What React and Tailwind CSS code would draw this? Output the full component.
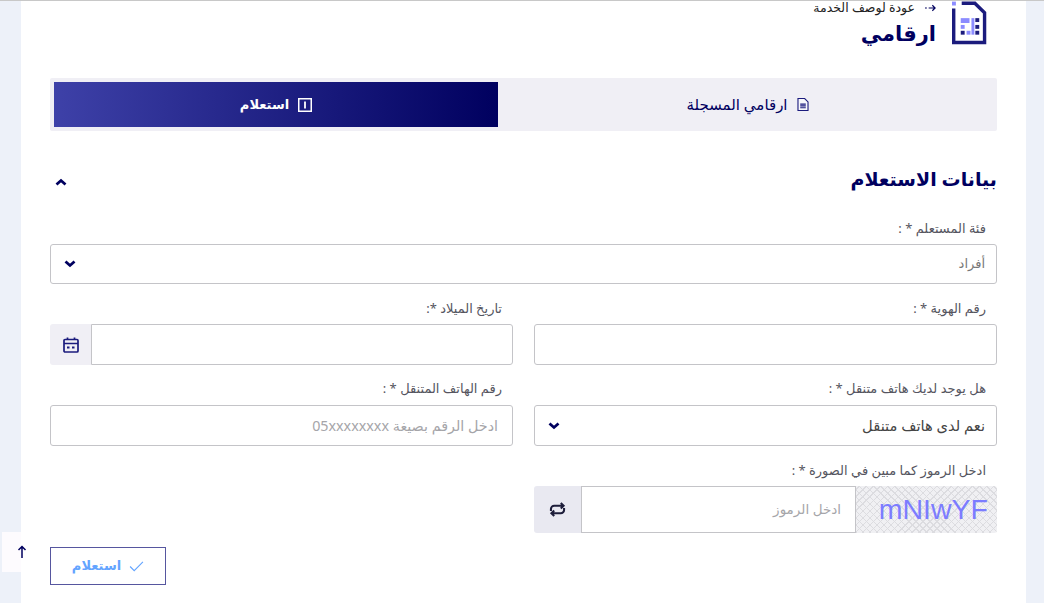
import React from "react";

function DocIcon({ className }) {
  return (
    <svg viewBox="0 0 36 44" className={className}>
      <path d="M1.750 7V42H33.500V11.500L23.500 1.750H10" fill="none" stroke="#1b1b7d" strokeWidth="3.500" />
      <rect x="0" y="0" width="4" height="4" fill="#8c8cff" />
      <rect x="9" y="17" width="9" height="5" fill="#8c8cff" />
      <rect x="9" y="24" width="4" height="4" fill="#8c8cff" />
      <rect x="9" y="30" width="4" height="4" fill="#1b1b7d" />
      <rect x="15" y="30" width="4" height="4" fill="#8c8cff" />
      <rect x="20" y="17" width="3" height="17" fill="#8c8cff" />
      <rect x="24" y="17" width="4" height="4" fill="#1b1b7d" />
      <rect x="24" y="24" width="4" height="4" fill="#1b1b7d" />
      <rect x="24" y="30" width="4" height="4" fill="#1b1b7d" />
    </svg>
  );
}

function Chevron({ up }) {
  return (
    <svg viewBox="0 0 12 8" className={up ? "w-[12px] h-[8px] rotate-180" : "w-[12px] h-[8px]"}>
      <path d="M1.500 1.500L6 5.500L10.500 1.500" fill="none" stroke="#00005f" strokeWidth="2.800" />
    </svg>
  );
}

function Label({ children }) {
  return <div className="text-[13px] leading-[16px] text-[#555560] pr-[11px] h-[16px]">{children}</div>;
}

function Box({ children, className = "" }) {
  return (
    <div className={"border border-[#c4c4c8] rounded-[3px] bg-white flex items-center " + className}>{children}</div>
  );
}

export default function App() {
  return (
    <div dir="rtl" className="h-[603px] overflow-hidden bg-[#edf1f9] font-['Noto_Sans','DejaVu_Sans',sans-serif] border-t border-[#c8c8c8] relative">
      <div className="mr-[18px] w-[1005px] h-full bg-white px-[29px]">
        {/* header */}
        <div className="h-[77px] flex items-start pr-[10px] gap-[16px]">
          <DocIcon className="w-[35px] h-[44px] shrink-0" />
          <div className="flex flex-col items-start">
            <div className="flex items-center gap-[10px] h-[13px]">
              <svg viewBox="0 0 12 8" className="w-[11px] h-[8px]">
                <path d="M0 4H2M4 4H11M8 1L11 4L8 7" fill="none" stroke="#00005f" strokeWidth="1.300" />
              </svg>
              <span className="text-[12.500px] leading-[13px] text-[#222]">عودة لوصف الخدمة</span>
            </div>
            <div className="text-[21px] leading-[30px] font-bold text-[#00005f] mt-[4px]">ارقامي</div>
          </div>
        </div>

        {/* tabs */}
        <div className="h-[53px] bg-[#f0eff5] rounded-[2px] flex p-[4px] pr-0">
          <div className="w-[499px] flex items-center justify-center gap-[9px] text-[15px] text-[#00005f]">
            <svg viewBox="0 0 12 14" className="w-[12px] h-[13px]">
              <path d="M.6.600H7.800L11.400 4.200V13.400H.6Z" fill="#f8f8fc" stroke="#1b1b7d" strokeWidth="1.200" />
              <path d="M3 6.500H9M3 8.500H9M3 10.500H9" stroke="#1b1b7d" strokeWidth="1.300" />
            </svg>
            ارقامي المسجلة
          </div>
          <div className="w-[444px] flex items-center justify-center gap-[9px] text-[13px] font-bold text-white bg-[linear-gradient(90deg,#3e41a8,#00005f)]">
            <svg viewBox="0 0 14 14" className="w-[14px] h-[14px]">
              <rect x=".75" y=".75" width="12.500" height="12.500" fill="none" stroke="#fff" strokeWidth="1.500" />
              <path d="M7 3.500V10.500" stroke="#fff" strokeWidth="1.800" />
            </svg>
            استعلام
          </div>
        </div>

        {/* section heading */}
        <div className="h-[30px] mt-[33px] flex items-center justify-between">
          <span className="text-[19px] font-bold leading-[30px] text-[#00005f]">بيانات الاستعلام</span>
          <span className="pl-[5px] pt-[5px] flex"><Chevron up /></span>
        </div>

        {/* form */}
        <div className="mt-[26px] flex flex-col">
          <Label>فئة المستعلم * :</Label>
          <Box className="h-[40px] mt-[8px] justify-between pr-[11px] pl-[13px]">
            <span className="text-[13px] text-[#777]">أفراد</span>
            <Chevron />
          </Box>

          <div className="grid grid-cols-[463px_463px] justify-between mt-[16px]">
            <div>
              <Label>رقم الهوية * :</Label>
              <Box className="h-[41px] mt-[8px]" />
            </div>
            <div>
              <Label>تاريخ الميلاد *:</Label>
              <div className="flex h-[41px] mt-[8px]">
                <Box className="flex-1 rounded-l-none" />
                <div className="w-[41px] bg-[#f0eff5] rounded-l-[3px] flex items-center justify-center">
                  <svg viewBox="0 0 16 16" className="w-[16px] h-[16px]">
                    <rect x="1" y="2.500" width="14" height="12.500" rx="1" fill="none" stroke="#1b1b7d" strokeWidth="1.700" />
                    <path d="M1 6.500H15M4.500 .5V3M11.500 .5V3" stroke="#1b1b7d" strokeWidth="1.700" />
                    <rect x="4" y="9.500" width="2.500" height="2" fill="#1b1b7d" />
                    <rect x="9" y="9.500" width="2.500" height="2" fill="#1b1b7d" />
                  </svg>
                </div>
              </div>
            </div>
          </div>

          <div className="grid grid-cols-[463px_463px] justify-between mt-[15px]">
            <div>
              <Label>هل يوجد لديك هاتف متنقل * :</Label>
              <Box className="h-[41px] mt-[9px] justify-between pr-[11px] pl-[13px]">
                <span className="text-[14.700px] text-[#444]">نعم لدى هاتف متنقل</span>
                <Chevron />
              </Box>
            </div>
            <div>
              <Label>رقم الهاتف المتنقل * :</Label>
              <Box className="h-[41px] mt-[9px] pr-[14px]">
                <span className="text-[14.300px] text-[#a5a5a9]">ادخل الرقم بصيغة 05xxxxxxxx</span>
              </Box>
            </div>
          </div>

          <div className="grid grid-cols-[463px_463px] justify-between mt-[16px]">
            <div>
              <Label>ادخل الرموز كما مبين في الصورة * :</Label>
              <div className="flex h-[47px] mt-[8px]">
                <div
                  dir="ltr"
                  className="w-[141px] rounded-r-[3px] flex items-center justify-end pr-[9px] text-[28.500px] leading-none text-[#7c7cff] font-['Liberation_Sans',sans-serif] bg-[#f0f0f3] bg-[repeating-linear-gradient(45deg,#dcdce0_0px,#dcdce0_1px,transparent_1px,transparent_5px),repeating-linear-gradient(-45deg,#dcdce0_0px,#dcdce0_1px,transparent_1px,transparent_5px)]"
                >
                  mNIwYF
                </div>
                <Box className="flex-1 rounded-none pr-[14px]">
                  <span className="text-[13.500px] text-[#a5a5a9]">ادخل الرموز</span>
                </Box>
                <div className="w-[47px] bg-[#e9e9f1] rounded-l-[3px] flex items-center justify-center">
                  <svg viewBox="0 0 18 16" className="w-[17px] h-[15px]">
                    <path d="M2 9.500V7.500A3.500 3.500 0 0 1 5.500 4H15.500M12.500 1L15.500 4L12.500 7M16 6.500V8.500A3.500 3.500 0 0 1 12.500 12H2.500M5.500 9L2.500 12L5.500 15" fill="none" stroke="#1d1d3a" strokeWidth="2.200" />
                  </svg>
                </div>
              </div>
            </div>
            <div />
          </div>

          <div className="mt-[14px] flex justify-end">
            <div className="w-[116px] h-[38px] border border-[#56569f] flex items-center justify-center gap-[8px] text-[13px] font-bold text-[#63a4ff]">
              <svg viewBox="0 0 16 12" className="w-[15px] h-[11px]">
                <path d="M1 6L5.500 10.500L15 1" fill="none" stroke="#63a4ff" strokeWidth="1.200" />
              </svg>
              استعلام
            </div>
          </div>
        </div>
      </div>

      {/* scroll to top */}
      <div dir="ltr" className="absolute left-[2px] top-[531px] w-[19px] h-[40px] bg-[#fdfbfe] flex items-center justify-end">
        <svg viewBox="0 0 10 14" className="w-[10px] h-[14px] shrink-0 -mr-[6px]">
          <path d="M5 13V1.500M1.500 5L5 1.500L8.500 5" fill="none" stroke="#00005f" strokeWidth="1.500" />
        </svg>
      </div>
    </div>
  );
}
